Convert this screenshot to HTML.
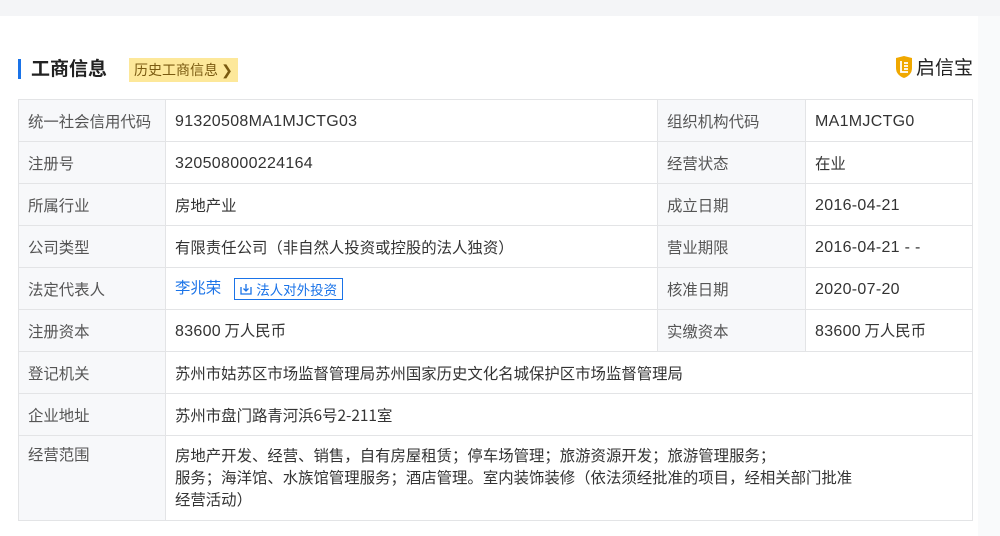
<!DOCTYPE html>
<html><head><meta charset="utf-8"><style>
body{margin:0;width:1000px;height:536px;background:#fff;font-family:"Noto Sans CJK SC","Liberation Sans",sans-serif;position:relative;overflow:hidden;color:#333}
.top{position:absolute;left:0;top:0;width:1000px;height:16px;background:#f4f5f7}
.rs{position:absolute;left:978px;top:16px;width:22px;height:520px;background:#f9fafb}
.bar{position:absolute;left:18px;top:59px;width:3px;height:20px;background:#1a73e8}
.title{position:absolute;left:31px;top:54px;font-size:19px;font-weight:bold;color:#222;line-height:28px}
.hist{position:absolute;left:129px;top:58px;height:24px;line-height:24px;padding:0 5px;background:#fde89a;color:#7a5a10;font-size:14px}
.logo{position:absolute;left:894px;top:53px;font-size:19px;color:#222;display:flex;align-items:center;gap:2px;line-height:28px}
table{position:absolute;left:18px;top:99px;border-collapse:collapse;font-size:15.4px}
td{border:1px solid #e3e4e6;padding:0 9px;height:41px;vertical-align:middle;line-height:20px}
td.l{background:#f7f8fa;color:#555}
.n{font-family:"Liberation Sans",sans-serif;font-size:16px;letter-spacing:0.3px}
.blue{color:#1a73e8}
.btn{display:inline-flex;align-items:center;gap:4px;border:1px solid #1a73e8;color:#1a73e8;font-size:13.5px;padding:0 5px;margin-left:13px;line-height:20px;vertical-align:middle}
</style></head><body>
<div class="top"></div><div class="rs"></div>
<div class="bar"></div><div class="title">工商信息</div>
<div class="hist">历史工商信息 ❯</div>
<div class="logo"><svg width="20" height="24" viewBox="0 0 20 24"><path d="M2 3 L10 1 L18 3 L18 13 Q18 20 10 23 Q2 20 2 13Z" fill="#f0a800"/><path d="M7 6 V17 H14 M10 8 H14 M10 11 H14 M10 14 H14" stroke="#fff" stroke-width="1.8" fill="none"/></svg>启信宝</div>
<table>
<colgroup><col style="width:147px"><col style="width:492px"><col style="width:148px"><col style="width:167px"></colgroup>
<tr><td class="l">统一社会信用代码</td><td><span class="n">91320508MA1MJCTG03</span></td><td class="l">组织机构代码</td><td><span class="n">MA1MJCTG0</span></td></tr>
<tr><td class="l">注册号</td><td><span class="n">320508000224164</span></td><td class="l">经营状态</td><td>在业</td></tr>
<tr><td class="l">所属行业</td><td>房地产业</td><td class="l">成立日期</td><td><span class="n">2016-04-21</span></td></tr>
<tr><td class="l">公司类型</td><td>有限责任公司（非自然人投资或控股的法人独资）</td><td class="l">营业期限</td><td><span class="n">2016-04-21 - -</span></td></tr>
<tr><td class="l">法定代表人</td><td><span class="blue">李兆荣</span><span class="btn"><svg width="12" height="12" viewBox="0 0 12 12"><path d="M1 4 V11 H11 V4 M6 1 V8 M3.5 5.5 L6 8 L8.5 5.5" stroke="#1a73e8" stroke-width="1.3" fill="none"/></svg>法人对外投资</span></td><td class="l">核准日期</td><td><span class="n">2020-07-20</span></td></tr>
<tr><td class="l">注册资本</td><td><span class="n">83600</span> 万人民币</td><td class="l">实缴资本</td><td><span class="n">83600</span> 万人民币</td></tr>
<tr><td class="l">登记机关</td><td colspan="3">苏州市姑苏区市场监督管理局苏州国家历史文化名城保护区市场监督管理局</td></tr>
<tr><td class="l">企业地址</td><td colspan="3">苏州市盘门路青河浜6号2-211室</td></tr>
<tr><td class="l" style="height:76px;vertical-align:top;padding-top:8px">经营范围</td><td colspan="3" style="vertical-align:top;padding-top:8px;line-height:22px">房地产开发、经营、销售，自有房屋租赁；停车场管理；旅游资源开发；旅游管理服务；<br>服务；海洋馆、水族馆管理服务；酒店管理。室内装饰装修（依法须经批准的项目，经相关部门批准<br>经营活动）</td></tr>
</table>
</body></html>
